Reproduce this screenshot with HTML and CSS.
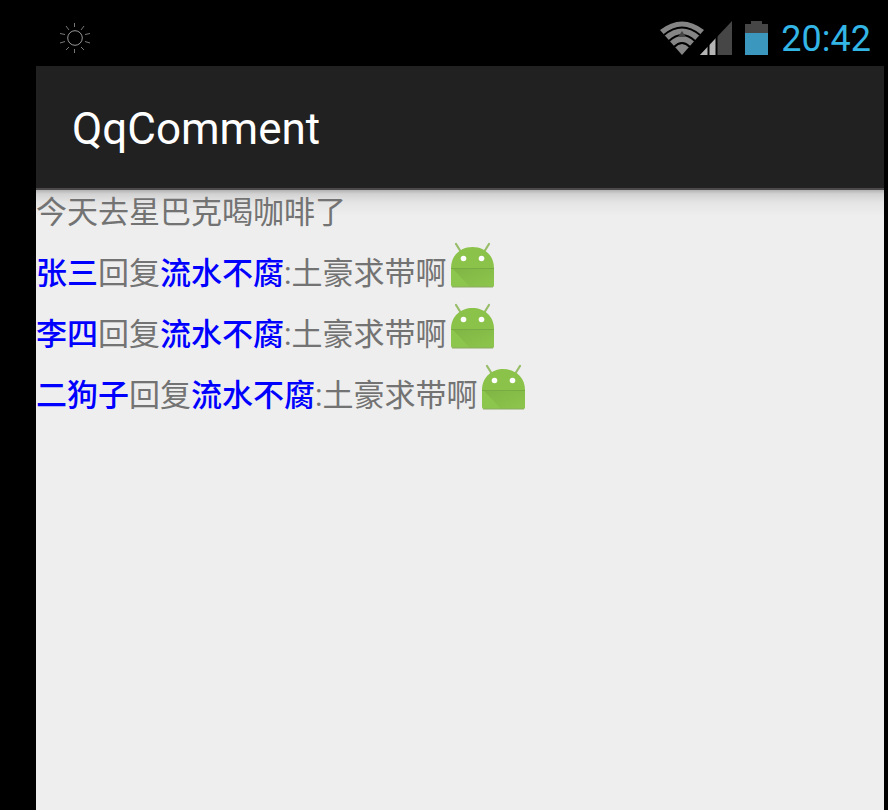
FILE: index.html
```html
<!DOCTYPE html>
<html lang="zh">
<head>
    <meta charset="UTF-8">
    <meta name="viewport" content="width=device-width, initial-scale=1.0">
    <title>QqComment</title>
    <link rel="stylesheet" href="styles.css">
</head>
<body>
    <svg class="defs" aria-hidden="true">
        <linearGradient id="shade" x1="0" y1="0" x2="1" y2="1">
            <stop offset="0" stop-color="#80b544"/>
            <stop offset="1" stop-color="#8dc64d"/>
        </linearGradient>
        <symbol id="android" viewBox="0 0 46 46">
            <path d="M6 2l5 8M39 2l-5 8" stroke="#97bd68" stroke-width="2.200" stroke-linecap="round"/>
            <path d="M1 26C1 13 11 5 22.500 5S44 13 44 26z" fill="#8bc34a"/>
            <path d="M1 26h43v17q0 2-2 2H3q-2 0-2-2z" fill="#8dc64d"/>
            <path d="M3 27l17 18h22q2 0 2-2V27z" fill="url(#shade)"/>
            <path d="M1 26.500h43" stroke="#79ab43" stroke-width="1"/>
            <path d="M2 45h41" stroke="#8aab62" stroke-width="1"/>
            <circle cx="13.500" cy="16.500" r="2.800" fill="#fff"/>
            <circle cx="31.500" cy="16.500" r="2.800" fill="#fff"/>
        </symbol>
    </svg>
    <div class="status">
        <svg class="sun" viewBox="0 0 32 32">
            <circle cx="16" cy="16" r="7.3"/>
            <path d="M15.500 1v4M15.500 27v4M1 11.500l5 1M1 21l5-1.500M31 11.500l-5 1M31 21l-5-1.500M7 4l3 4M25 4l-3 4M7 28l3-3M25 28l-3-3"/>
        </svg>
        <div class="indicators">
            <svg class="wifi" viewBox="0 0 44 34">
                <path d="M0 9Q22-8 44 9L22 34z" fill="#858585"/>
                <path d="M4 14Q22-1 40 14M9 20Q22 8 35 20M14 26Q22 18 30 26" fill="none" stroke="#000" stroke-width="2"/>
                <path d="M22 10l4 6h-8z" fill="#444"/>
            </svg>
            <svg class="signal" viewBox="0 0 32 34">
                <path d="M32 0v34H0z" fill="#464646"/>
                <path d="M16 17v17H0z" fill="#b5b5b5"/>
                <path d="M8.500 22v12M16.500 15v19" stroke="#000" stroke-width="2"/>
            </svg>
            <svg class="battery" viewBox="0 0 23 34">
                <path d="M0 3h6V0h11v3h6v31H0z" fill="#464646"/>
                <path d="M0 12h23v22H0z" fill="#3b97bd"/>
            </svg>
            <span class="clock">20:42</span>
        </div>
    </div>
    <div class="screen">
        <header>
            <h1>QqComment</h1>
        </header>
        <main>
            <p class="post">今天去星巴克喝咖啡了</p>
            <p class="reply"><span class="name">张三</span>回复<span class="name">流水不腐</span>:土豪求带啊<svg class="face"><use href="#android"/></svg></p>
            <p class="reply"><span class="name">李四</span>回复<span class="name">流水不腐</span>:土豪求带啊<svg class="face"><use href="#android"/></svg></p>
            <p class="reply"><span class="name">二狗子</span>回复<span class="name">流水不腐</span>:土豪求带啊<svg class="face"><use href="#android"/></svg></p>
        </main>
    </div>
</body>
</html>
```

FILE: styles.css
```css
*{box-sizing: border-box;margin: 0;padding: 0;}
body{
    display: flex;
    flex-direction: column;
    min-height: 100vh;
    padding: 0 4px 0 36px;
    background-color: #000;
    font-family: Roboto, "Noto Sans CJK SC", sans-serif;
}
.defs{position: absolute;width: 0;height: 0;}

.status{
    display: flex;
    justify-content: space-between;
    align-items: center;
    height: 66px;
    padding: 10px 13px 0 23px;
}
.sun{width: 32px;height: 32px;fill: none;stroke: #777;stroke-width: 1;}
.sun circle{stroke: #999;}
.indicators{display: flex;align-items: center;}
.wifi{width: 44px;height: 34px;margin-right: -4px;}
.signal{width: 32px;height: 34px;margin-right: 13px;}
.battery{width: 23px;height: 34px;margin-right: 13px;}
.clock{padding-top: 2px;font-size: 36px;line-height: 42px;color: #33b5e5;}

.screen{flex: 1;background-color: #eee;}
header{
    display: flex;
    align-items: center;
    height: 124px;
    padding: 4px 36px 0;
    background-color: #212121;
    border-bottom: 2px solid #4c4a4b;
}
h1{font-size: 44px;line-height: 52px;font-weight: 400;color: #fff;}

main{
    padding-top: 1px;
    color: #737373;
    font-size: 31px;
    line-height: 44px;
    background: linear-gradient(#b4b2b3, #d2d2d2 4px, #e4e4e4 12px, #eee 26px);
}
.reply{display: flex;align-items: flex-end;height: 61px;}
.name{font-weight: 500;color: #00f;}
.face{width: 46px;height: 46px;margin: 0 0 8px 3px;}
```
